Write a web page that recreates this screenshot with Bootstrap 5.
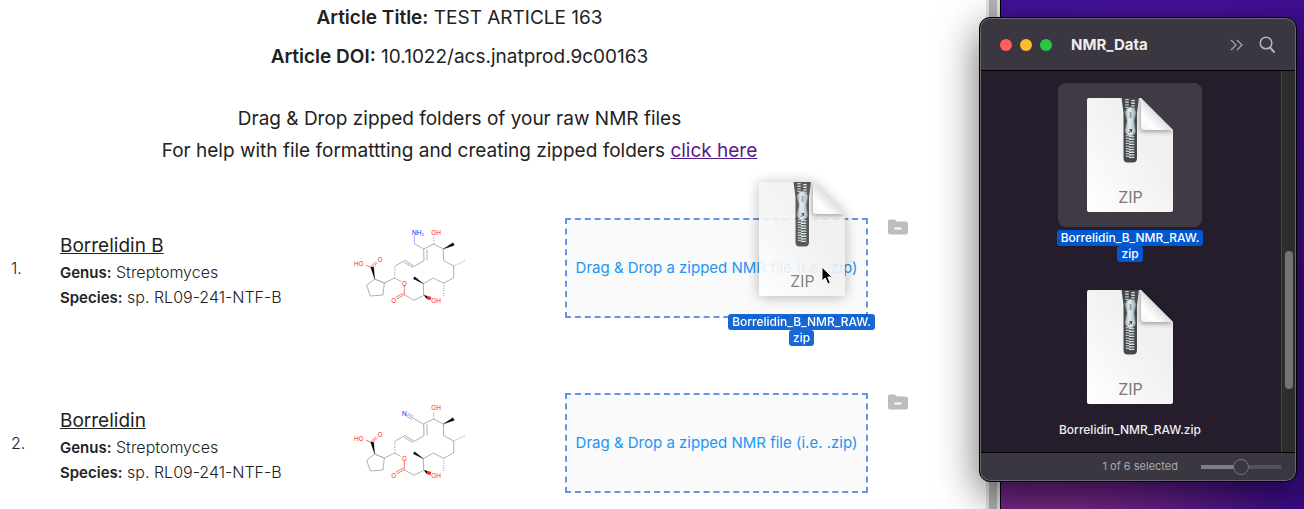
<!DOCTYPE html>
<html lang="en">
<head>
<meta charset="utf-8">
<meta name="viewport" content="width=device-width, initial-scale=1">
<title>NMR upload</title>
<link href="https://cdn.jsdelivr.net/npm/bootstrap@5.3.0/dist/css/bootstrap.min.css" rel="stylesheet">
<style>
  body { font-family: Inter, "Liberation Sans", sans-serif; color: #222; background: #fff; }
  .browser { border-right: 1px solid #000; }
  .page-scroll { width: 14px; background: linear-gradient(90deg, #e4e4e4 3px, #b4b4b4 3px 11px, #e4e4e4 11px); }
  .content { padding-right: 67px; }
  .intro { font-size: 19px; line-height: 32px; font-weight: 400; padding: 2px 0 51px; }
  .intro p { margin: 0 0 7px; }
  .intro .help { margin: 30px 0 0; }
  .intro b { font-weight: 600; }
  .visited { color: #551a8b; }
  .compound { display: grid; grid-template-columns: 49px minmax(0, 1fr) 225px 303px 40px; align-items: center; padding: 0 11px; margin-bottom: 75px; font-size: 16px; font-weight: 300; line-height: 24px; }
  .compound:last-child { margin-bottom: 0; }
  .compound h2 { font-size: 19px; line-height: 28px; font-weight: 400; margin: 6px 0 0; }
  .compound b { font-weight: 600; font-size: 15px; }
  .compound svg { font-weight: 400; }
  .dropzone { height: 100px; border: 2px dashed #6495ed; background: #fafafa; color: #2196f3; font-size: 15px; font-weight: 400; }
  .desktop { width: 303px; background:
      radial-gradient(ellipse 260px 120px at 15% 105%, #8c2f7c, transparent),
      linear-gradient(100deg, #43119a 0%, #45119b 55%, #380a84 100%); }
  .finder { top: 17px; right: 7px; width: 318px; border: 1px solid #000; border-radius: 11px; background: #3b3741; color: #eee; overflow: hidden; box-shadow: inset 0 0 0 1px #6a6770, 0 12px 42px rgba(0, 0, 0, .6); padding: 1px; }
  .finder-head { height: 51px; padding: 0 19px; border-radius: 10px 10px 0 0; }
  .finder-head h1 { font-size: 15px; font-weight: 700; margin: 0 0 0 11px; line-height: 20px; }
  .light { width: 12px; height: 12px; border-radius: 50%; margin-right: 8px; }
  .files { background: #251d2b; border-top: 1px solid #000; border-bottom: 1px solid #000; height: 383px; }
  .file-list { gap: 13px; padding: 12px 2px 0 0; }
  .track { width: 14px; background: #2d2d2d; border-left: 1px solid #48454b; padding: 180px 2px 0 3px; }
  .thumb { height: 138px; border-radius: 4px; background: #747474; }
  .file { width: 147px; font-size: 12px; line-height: 16px; font-weight: 500; }
  .tile { width: 144px; height: 144px; border-radius: 8px; margin-bottom: 3px; }
  .tile.on { background: #403a45; }
  .file-name span { background: #0058d0; border-radius: 3px; padding: 0 4px; height: 16px; color: #fff; }
  .dragging { left: 161px; top: -53px; }
  .dragging .tile svg { opacity: .9; filter: drop-shadow(0 1px 7px rgba(0, 0, 0, .3)); }
  .dragging .file-name { opacity: .9; }
  .cursor { left: 93px; top: 99px; }
  .finder-foot { height: 27px; font-size: 11px; color: #aaa7ad; padding-right: 14px; }
  .size { appearance: none; width: 80px; height: 16px; margin: 0 0 0 23px; background: linear-gradient(90deg, #827e87 50%, #55515b 50%) center / 100% 4px no-repeat; }
  .size::-webkit-slider-thumb { appearance: none; width: 16px; height: 16px; border-radius: 50%; border: 1px solid #77747c; background: #3b3741; }
</style>
</head>
<body>
<svg class="position-absolute" width="0" height="0" aria-hidden="true">
  <defs>
    <linearGradient id="paper" x1="0" y1="1" x2="1" y2="0"><stop offset="0" stop-color="#fff"/><stop offset=".6" stop-color="#f1f1f1"/><stop offset="1" stop-color="#eee"/></linearGradient>
    <linearGradient id="fold" x1="1" y1="0" x2="0" y2="1"><stop offset=".45" stop-color="#dadada"/><stop offset=".75" stop-color="#fff"/><stop offset="1" stop-color="#f2f2f2"/></linearGradient>
    <linearGradient id="metal"><stop offset="0" stop-color="#9fb0b5"/><stop offset=".4" stop-color="#e3eef1"/><stop offset="1" stop-color="#9baaaf"/></linearGradient>
    <filter id="soft" x="-30%" y="-30%" width="160%" height="160%"><feGaussianBlur stdDeviation="2"/></filter>
    <clipPath id="sheet"><path d="M2 0H54L86 32V112a2 2 0 0 1-2 2H2a2 2 0 0 1-2-2V2a2 2 0 0 1 2-2z"/></clipPath>
  </defs>
  <symbol id="zip" viewBox="0 0 86 114">
    <g clip-path="url(#sheet)">
      <path fill="url(#paper)" d="M0 0h86v114H0z"/>
      <path d="M53 0V30q0 4 4 4H86z" fill="#777" opacity=".65" filter="url(#soft)"/>
      <path d="M54 0V29q0 3 3 3H86z" fill="url(#fold)"/>
      <path d="M34.500 0H52l-2 15v45q0 4.500-4 4.500h-5.500q-4 0-4-4.500V15z" fill="#48484b"/>
      <path d="M40 1v9M40.500 37v22" stroke="#b9cacc" stroke-width="3.500" stroke-dasharray="1.300 1.300"/>
      <path d="M46 2v9M45.500 38v22" stroke="#d3e0e2" stroke-width="3.500" stroke-dasharray="1.300 1.300"/>
      <path d="M43 38v23" stroke="#eaf2f3" stroke-width="2" stroke-dasharray="1.300 1.300"/>
      <path d="M40 10.500q3.500-2.500 7 0l2 3.500-2 9 1.500 10q-1 5-5 5t-5.500-5l2-10-2-9z" fill="url(#metal)" stroke="#7a898e" stroke-width=".5"/>
      <path d="M43.500 14v6" stroke="#93a4a9" stroke-width="2"/>
      <path d="M42 35l2.500-4M42.500 31.500h2v2.500" fill="none" stroke="#444" stroke-width="1"/>
    </g>
    <text x="43.500" y="105" text-anchor="middle" font-family="Inter, sans-serif" font-weight="400" font-size="16" fill="#777">ZIP</text>
  </symbol>
  <symbol id="ring" viewBox="0 9 420 300">
    <g fill="none" stroke="#888" stroke-width="2">
      <path d="M104 192L80 211L91 243L129 240L133 204zM133 204L164 189L184 200M164 154L195 136L223 154L252 137M193 142L220 158M252 137L251 102M261 136L261 104M251 102L281 87L310 102L311 137L341 153V188L311 205L280 189L250 206L251 241L222 256L193 239"/>
      <path d="M164 189V154M281 87V62M341 153L374 137M311 205V243M104 192L133 204" stroke="#aaa" stroke-width="4" stroke-dasharray="2 3"/>
    </g>
    <g fill="none" stroke="#e33" stroke-width="2"><path d="M97 158L78 151M97 157L112 144M94 153L109 140M193 212V239M193 239L170 252M190 234L167 247"/></g>
    <path d="M104 192L92 156L101 157zM310 102L339 83L343 91zM250 206L220 191L224 185z" stroke="#000"/>
    <path d="M251 240L263 243L260 252z"/><path d="M263 243L274 246L271 256L260 252z" fill="#f22"/>
    <g font-family="Inter, sans-serif" font-size="19" fill="#f22"><text x="274" y="59">OH</text><text x="42" y="154">HO</text><text x="113" y="142">O</text><text x="186" y="213">O</text><text x="154" y="265">O</text><text x="274" y="264">OH</text></g>
  </symbol>
  <symbol id="folder" viewBox="0 0 20 15"><path d="M2 0h5l2 2h9a2 2 0 0 1 2 2v9a2 2 0 0 1-2 2H2a2 2 0 0 1-2-2V2a2 2 0 0 1 2-2zM6.500 8v2h7V8z" fill="#bdbdbd" fill-rule="evenodd"/></symbol>
</svg>
<div class="d-flex min-vh-100 position-relative overflow-hidden">
  <div class="browser d-flex flex-grow-1">
    <main class="content flex-grow-1">
      <header class="intro text-center">
        <p><b>Article Title:</b> TEST ARTICLE 163</p>
        <p><b>Article DOI:</b> 10.1022/acs.jnatprod.9c00163</p>
        <p class="help">Drag &amp; Drop zipped folders of your raw NMR files<br>For help with file formattting and creating zipped folders <a class="visited" href="#">click here</a></p>
      </header>
      <section class="compounds">
        <article class="compound">
          <div>1.</div>
          <div><h2><u>Borrelidin B</u></h2><div><b>Genus:</b> Streptomyces</div><div><b>Species:</b> sp. RL09-241-NTF-B</div></div>
          <svg width="140" height="100" viewBox="0 9 420 300" role="img" aria-label="Borrelidin B structure"><use href="#ring" y="9" width="420" height="300"/><path d="M251 102L223 86" fill="none" stroke="#888" stroke-width="2"/><path d="M223 86V60" stroke="#77f" stroke-width="2"/><text x="216" y="59" font-size="19" fill="#22f">NH<tspan font-size="12" dy="3">2</tspan></text></svg>
          <div class="dropzone position-relative d-flex align-items-center justify-content-center">
            <span class="text-nowrap">Drag &amp; Drop a zipped NMR file (i.e. .zip)</span>
            <div class="file dragging position-absolute d-flex flex-column align-items-center">
              <div class="tile d-flex align-items-center justify-content-center"><svg width="86" height="114"><use href="#zip"/></svg></div>
              <div class="file-name d-flex flex-column align-items-center"><span>Borrelidin_B_NMR_RAW.</span><span>zip</span></div>
              <svg class="cursor position-absolute" width="13" height="19" viewBox="0 0 13 19"><path d="M1 1v14l3.300-3 2.500 6 2.500-1-2.500-6H11z" fill="#000" stroke="#fff"/></svg>
            </div>
          </div>
          <button class="btn p-0 border-0 d-flex align-self-start ms-auto" type="button" aria-label="Remove folder"><svg width="20" height="18"><use href="#folder"/></svg></button>
        </article>
        <article class="compound">
          <div>2.</div>
          <div><h2><u>Borrelidin</u></h2><div><b>Genus:</b> Streptomyces</div><div><b>Species:</b> sp. RL09-241-NTF-B</div></div>
          <svg width="140" height="100" viewBox="0 9 420 300" role="img" aria-label="Borrelidin structure"><use href="#ring" y="9" width="420" height="300"/><path d="M251 102L218 84" fill="none" stroke="#888" stroke-width="2"/><path d="M219 84L201 74M221 79L203 69M216 88L199 79" stroke="#66c" stroke-width="1.500"/><text x="186" y="77" font-size="19" fill="#22f">N</text></svg>
          <div class="dropzone d-flex align-items-center justify-content-center"><span class="text-nowrap">Drag &amp; Drop a zipped NMR file (i.e. .zip)</span></div>
          <button class="btn p-0 border-0 d-flex align-self-start ms-auto" type="button" aria-label="Remove folder"><svg width="20" height="18"><use href="#folder"/></svg></button>
        </article>
      </section>
    </main>
    <div class="page-scroll flex-shrink-0"></div>
  </div>
  <div class="desktop flex-shrink-0"></div>
  <aside class="finder position-absolute">
    <div class="finder-head d-flex align-items-center">
      <span class="light" style="background:#ff5f57"></span><span class="light" style="background:#febc2e"></span><span class="light" style="background:#28c840"></span>
      <h1>NMR_Data</h1>
      <svg class="ms-auto me-3" width="13" height="12" viewBox="0 0 13 12" fill="none" stroke="#aaa8ae" stroke-width="1.200"><path d="M1 1l5 5-5 5M7 1l5 5-5 5"/></svg>
      <svg width="17" height="18" viewBox="0 0 17 18" fill="none" stroke="#b5b3b8" stroke-width="1.600"><circle cx="7" cy="7" r="5.800"/><path d="M11 11.500l4.500 5" stroke-width="2"/></svg>
    </div>
    <div class="files d-flex">
      <div class="file-list flex-grow-1 d-flex flex-column align-items-center">
        <div class="file d-flex flex-column align-items-center">
          <div class="tile on d-flex align-items-center justify-content-center"><svg width="86" height="114"><use href="#zip"/></svg></div>
          <div class="file-name d-flex flex-column align-items-center"><span>Borrelidin_B_NMR_RAW.</span><span>zip</span></div>
        </div>
        <div class="file d-flex flex-column align-items-center">
          <div class="tile d-flex align-items-center justify-content-center"><svg width="86" height="114"><use href="#zip"/></svg></div>
          <div>Borrelidin_NMR_RAW.zip</div>
        </div>
      </div>
      <div class="track"><div class="thumb"></div></div>
    </div>
    <div class="finder-foot d-flex align-items-center justify-content-end">1 of 6 selected<input class="size" type="range" value="50" aria-label="Icon size"></div>
  </aside>
</div>
<script src="https://cdn.jsdelivr.net/npm/bootstrap@5.3.0/dist/js/bootstrap.bundle.min.js"></script>
</body>
</html>
